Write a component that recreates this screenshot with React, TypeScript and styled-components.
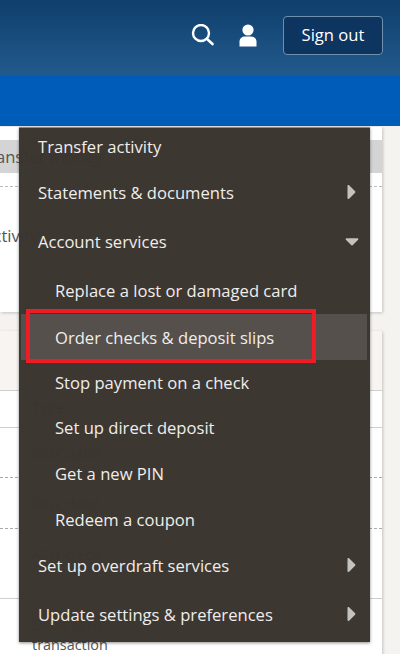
import styled, { createGlobalStyle } from "styled-components";
import { FaCaretDown, FaCaretRight } from "react-icons/fa";

type MenuEntry = {
  label: string;
  height: number;
  sub?: boolean;
  arrow?: "right" | "down";
  active?: boolean;
  gapAbove?: number;
};

const entries: MenuEntry[] = [
  { label: "Transfer activity", height: 36 },
  { label: "Statements & documents", height: 56, arrow: "right" },
  { label: "Account services", height: 42, arrow: "down" },
  { label: "Replace a lost or damaged card", height: 48, sub: true, gapAbove: 4 },
  { label: "Order checks & deposit slips", height: 46, sub: true, active: true },
  { label: "Stop payment on a check", height: 44, sub: true },
  { label: "Set up direct deposit", height: 46, sub: true },
  { label: "Get a new PIN", height: 46, sub: true },
  { label: "Redeem a coupon", height: 46, sub: true },
  { label: "Set up overdraft services", height: 46, arrow: "right" },
  { label: "Update settings & preferences", height: 52, arrow: "right" },
];

const GlobalStyle = createGlobalStyle`
  html, body {
    margin: 0;
    padding: 0;
    height: 654px;
    overflow: hidden;
    background: #f4f3ef;
    font-family: "Open Sans", "Liberation Sans", sans-serif;
  }
`;

const Page = styled.div`
  position: relative;
  width: 400px;
  height: 654px;
  overflow: hidden;
`;

const Header = styled.header`
  height: 76px;
  box-sizing: border-box;
  display: flex;
  align-items: center;
  justify-content: flex-end;
  padding: 0 17px 6px 0;
  background: linear-gradient(180deg, #0f3f6c 0%, #225a8d 100%);
`;

const IconButton = styled.span<{ $gap: number }>`
  display: flex;
  color: #fff;
  margin-right: ${(p) => p.$gap}px;
`;

const SignOut = styled.button`
  width: 100px;
  height: 39px;
  padding: 0 0 2px;
  border: 1px solid #6f8fae;
  border-radius: 4px;
  background: #0d3560;
  color: #fff;
  font-family: inherit;
  font-size: 16.6px;
`;

const NavBar = styled.nav`
  height: 50px;
  background: #005cb9;
`;

const Content = styled.main`
  display: flex;
  flex-direction: column;
  gap: 19px;
  width: 382px;
  padding-top: 1px;
`;

const Card = styled.section<{ $height: number }>`
  height: ${(p) => p.$height}px;
  background: #fff;
  box-shadow: 1px 1px 3px rgba(0, 0, 0, 0.2);
  overflow: hidden;
`;

const ActionChip = styled.div`
  height: 33px;
  margin-top: 13px;
  background: #d4d4d4;
  color: #555;
  font-size: 16.6px;
  line-height: 33px;
  text-indent: -20px;
  white-space: nowrap;
`;

const Dashed = styled.div<{ $top: number }>`
  margin-top: ${(p) => p.$top}px;
  border-top: 1px dashed #bbb;
`;

const AccountText = styled.div`
  margin-top: 38px;
  color: #555;
  font-size: 16.6px;
  line-height: 22px;
  text-indent: -17px;
  white-space: nowrap;
`;

const CardHeader = styled.div`
  height: 59px;
  background: #f7f4f1;
  border-bottom: 1px solid #cfcfcf;
`;

const TypeHead = styled.div`
  height: 37px;
  box-sizing: border-box;
  padding: 7px 0 0 32px;
  border-bottom: 1px solid #cfcfcf;
  color: #555;
  font-size: 14.4px;
  line-height: 20px;
`;

const TxRow = styled.div<{ $height: number; $solid?: boolean }>`
  height: ${(p) => p.$height}px;
  box-sizing: border-box;
  padding: 16px 0 0 32px;
  border-bottom: 1px ${(p) => (p.$solid ? "solid #cfcfcf" : "dashed #aaa")};
  color: #555;
  font-size: 14.4px;
  line-height: 20px;
`;

const Menu = styled.ul`
  position: absolute;
  left: 19px;
  top: 127px;
  width: 351px;
  margin: 0;
  padding: 0 0 2px;
  list-style: none;
  background: rgba(58, 52, 47, 0.985);
  border-top: 1px solid #8c8c8c;
  box-sizing: border-box;
  box-shadow: 0 1px 3px rgba(0, 0, 0, 0.45);
`;

const MenuItem = styled.li<{
  $height: number;
  $sub?: boolean;
  $active?: boolean;
  $gapAbove?: number;
}>`
  height: ${(p) => p.$height}px;
  display: flex;
  align-items: center;
  justify-content: space-between;
  margin: ${(p) => (p.$active ? "0 3px 0 2px" : `${p.$gapAbove ?? 0}px 0 0`)};
  padding: 0 7px 0 ${(p) => (p.$active ? "34px" : p.$sub ? "36px" : "19px")};
  background: ${(p) => (p.$active ? "#55504b" : "transparent")};
  color: #f0eeea;
  font-size: 16.6px;
`;

const Arrow = styled.span`
  display: flex;
  align-items: center;
  justify-content: center;
  width: 22px;
  height: 22px;
  color: #c4c2bf;

  & svg {
    flex: none;
  }
`;

const Callout = styled.div`
  position: absolute;
  left: 26px;
  top: 309px;
  width: 290px;
  height: 54px;
  box-sizing: border-box;
  border: 4px solid #ee1c25;
`;

function SearchIcon() {
  return (
    <svg width="23" height="23" viewBox="0 1 23 23" fill="none" stroke="#fff">
      <circle cx="10" cy="10" r="8" strokeWidth="2.4" />
      <path d="M15.8 15.8 L21.5 21" strokeWidth="2.6" strokeLinecap="round" />
    </svg>
  );
}

function UserIcon() {
  return (
    <svg width="18" height="23" viewBox="0 0 18 23" fill="#fff">
      <circle cx="9" cy="6" r="5.6" />
      <path d="M0.5 22.5 V17.5 C0.5 14.5 3 12.5 6 12.5 H12 C15 12.5 17.5 14.5 17.5 17.5 V22.5 Z" />
    </svg>
  );
}

export default function App() {
  return (
    <Page>
      <GlobalStyle />
      <Header>
        <IconButton $gap={25}>
          <SearchIcon />
        </IconButton>
        <IconButton $gap={26}>
          <UserIcon />
        </IconButton>
        <SignOut>Sign out</SignOut>
      </Header>
      <NavBar />
      <Content>
        <Card $height={185}>
          <ActionChip>Transfer money</ActionChip>
          <Dashed $top={13} />
          <AccountText>Activity</AccountText>
        </Card>
        <Card $height={330}>
          <CardHeader />
          <TypeHead>Type</TypeHead>
          <TxRow $height={50}>Misc debit</TxRow>
          <TxRow $height={51}>Misc debit</TxRow>
          <TxRow $height={70} $solid>
            ACH credit
          </TxRow>
          <TxRow $height={60}>
            Debit card
            <br />
            transaction
          </TxRow>
        </Card>
      </Content>
      <Menu>
        {entries.map((entry) => (
          <MenuItem
            key={entry.label}
            $height={entry.height}
            $sub={entry.sub}
            $active={entry.active}
            $gapAbove={entry.gapAbove}
          >
            {entry.label}
            {entry.arrow && (
              <Arrow>
                {entry.arrow === "right" ? (
                  <FaCaretRight size={24} />
                ) : (
                  <FaCaretDown size={22} />
                )}
              </Arrow>
            )}
          </MenuItem>
        ))}
      </Menu>
      <Callout />
    </Page>
  );
}
